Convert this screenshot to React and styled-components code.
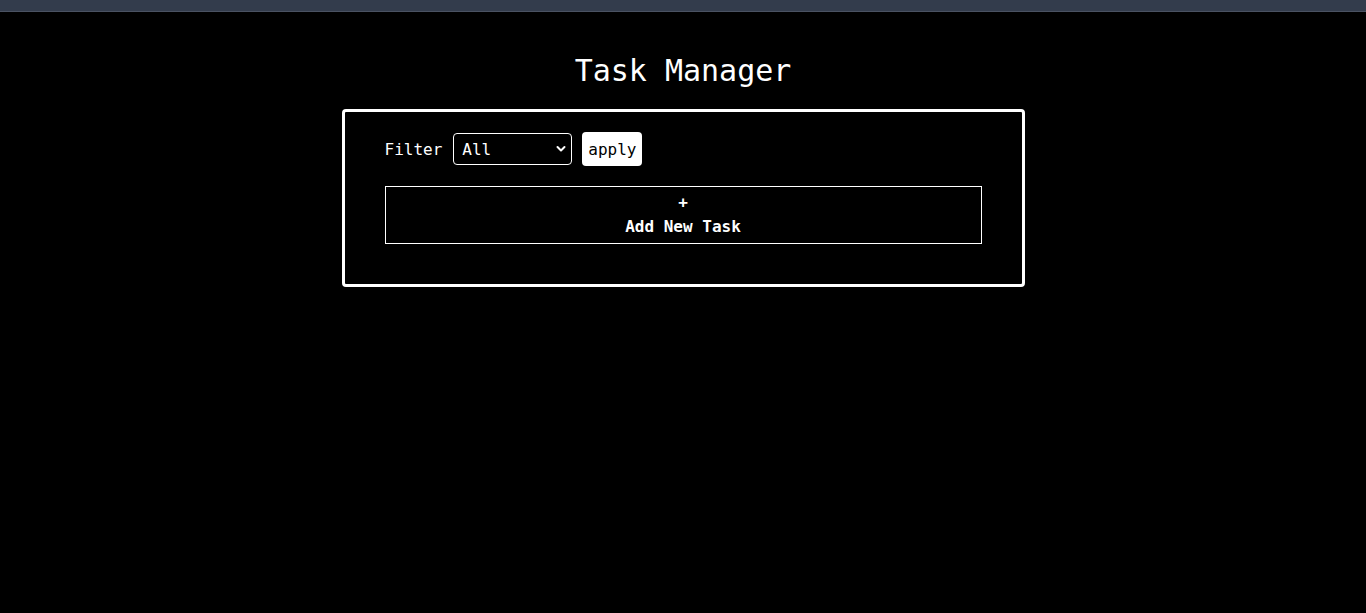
import React from "react";
import styled, { createGlobalStyle } from "styled-components";

const Global = createGlobalStyle`
  html, body { margin: 0; padding: 0; background: #000; }
  body { font-family: "DejaVu Sans Mono", "Liberation Mono", monospace; color: #fff; }
`;

const TopBar = styled.div`
  height: 11px;
  background: #333c4c;
  border-bottom: 1px solid #4a5262;
`;

const Main = styled.main`
  display: flex;
  flex-direction: column;
  align-items: center;
  padding-top: 40px;
`;

const Title = styled.h1`
  margin: 0 0 20px;
  font-size: 30px;
  font-weight: 400;
  line-height: 37px;
`;

const Card = styled.section`
  width: 683px;
  box-sizing: border-box;
  border: 3px solid #fff;
  border-radius: 4px;
  padding: 20px 40px 40px;
  display: flex;
  flex-direction: column;
  gap: 20px;
`;

const FilterRow = styled.div`
  display: flex;
  align-items: center;
  gap: 10px;
  font-size: 16px;
`;

const Label = styled.label`
  font-size: 16px;
  margin-right: 1px;
`;

const SelectWrap = styled.div`
  position: relative;
  display: flex;
`;

const Select = styled.select`
  appearance: none;
  width: 119px;
  height: 32px;
  box-sizing: border-box;
  background: #000;
  color: #fff;
  border: 1px solid #fff;
  border-radius: 4px;
  padding: 0 8px;
  font-family: inherit;
  font-size: 16px;
`;

const Chevron = styled.svg`
  position: absolute;
  right: 6px;
  top: 12px;
  pointer-events: none;
`;

const ApplyButton = styled.button`
  height: 34px;
  background: #fff;
  color: #000;
  border: none;
  border-radius: 4px;
  padding: 0 6px;
  font-family: inherit;
  font-size: 16px;
`;

const AddTask = styled.button`
  display: flex;
  flex-direction: column;
  align-items: center;
  width: 100%;
  height: 58px;
  box-sizing: border-box;
  padding: 4px 0;
  background: #000;
  color: #fff;
  border: 1px solid #fff;
  font-family: inherit;
  font-size: 16px;
  font-weight: 700;
  line-height: 24px;
`;

export default function App() {
  return (
    <>
      <Global />
      <TopBar />
      <Main>
        <Title>Task Manager</Title>
        <Card>
          <FilterRow>
            <Label htmlFor="flt">Filter</Label>
            <SelectWrap>
              <Select id="flt" defaultValue="all">
                <option value="all">All</option>
                <option value="done">Done</option>
                <option value="todo">Todo</option>
              </Select>
              <Chevron width="10" height="8" viewBox="0 0 10 8">
                <path d="M1.5 2 L5 5.5 L8.5 2" fill="none" stroke="#fff" strokeWidth="2" strokeLinecap="round" strokeLinejoin="round" />
              </Chevron>
            </SelectWrap>
            <ApplyButton>apply</ApplyButton>
          </FilterRow>
          <AddTask>
            <span>+</span>
            <span>Add New Task</span>
          </AddTask>
        </Card>
      </Main>
    </>
  );
}
